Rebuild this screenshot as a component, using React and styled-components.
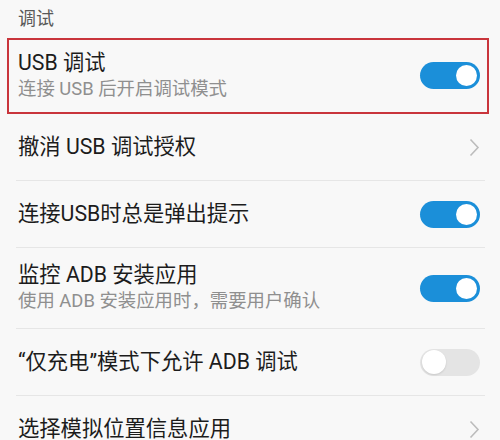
import React from 'react'
import styled, { createGlobalStyle } from 'styled-components'

const GlobalStyle = createGlobalStyle`
  html, body {
    margin: 0;
    padding: 0;
    background: #f8f8f8;
  }
  body {
    font-family: "Roboto", "Noto Sans CJK SC", sans-serif;
    -webkit-font-smoothing: antialiased;
  }
`

const items = [
  { title: 'USB 调试', sub: '连接 USB 后开启调试模式', type: 'switch', on: true, highlight: true },
  { title: '撤消 USB 调试授权', type: 'arrow' },
  { title: '连接USB时总是弹出提示', type: 'switch', on: true },
  { title: '监控 ADB 安装应用', sub: '使用 ADB 安装应用时，需要用户确认', type: 'switch', on: true },
  { title: '“仅充电”模式下允许 ADB 调试', type: 'switch', on: false },
  { title: '选择模拟位置信息应用', type: 'arrow' },
]

function App() {
  return (
    <Page>
      <GlobalStyle />
      <SectionHeader>调试</SectionHeader>
      <List>
        {items.map((item) => (
          <Row key={item.title} $highlight={item.highlight}>
            <RowInner $double={!!item.sub} $highlight={item.highlight}>
              <Texts>
                <Title>{item.title}</Title>
                {item.sub && <Subtitle>{item.sub}</Subtitle>}
              </Texts>
              {item.type === 'switch' ? (
                <Switch $on={item.on}>
                  <Knob $on={item.on} />
                </Switch>
              ) : (
                <Chevron width="11" height="19" viewBox="0 0 11 19">
                  <polyline points="1.5,1.5 9,9.5 1.5,17.5" fill="none" stroke="#bcbcbc" strokeWidth="1.6" />
                </Chevron>
              )}
            </RowInner>
          </Row>
        ))}
      </List>
    </Page>
  )
}

const Page = styled.div`
  width: 500px;
  height: 440px;
  overflow: hidden;
  background: #f8f8f8;
`

const SectionHeader = styled.div`
  height: 38px;
  box-sizing: border-box;
  padding: 0 18px 4px;
  display: flex;
  align-items: center;
  font-size: 18px;
  color: #595959;
`

const List = styled.div`
  display: flex;
  flex-direction: column;
`

const Row = styled.div`
  position: relative;
  padding-left: 16px;

  ${({ $highlight }) => $highlight && `
    &::after {
      content: '';
      position: absolute;
      left: 7px;
      right: 11px;
      top: 0;
      bottom: 0;
      border: 2px solid #c9353c;
      pointer-events: none;
    }
  `}
`

const RowInner = styled.div`
  display: flex;
  align-items: center;
  justify-content: space-between;
  box-sizing: border-box;
  margin-right: 15px;
  padding: ${({ $double, $highlight }) => ($highlight ? '11px' : $double ? '14px' : '0')} 5px ${({ $double, $highlight }) => ($highlight ? '11px' : $double ? '14px' : '0')} 2px;
  min-height: ${({ $double }) => ($double ? '81px' : '67px')};
  border-bottom: 1px solid #e6e6e6;
  ${({ $highlight }) => $highlight && 'min-height: 76px;'}
`

const Texts = styled.div`
  display: flex;
  flex-direction: column;
`

const Title = styled.div`
  font-size: 21.3px;
  line-height: 26px;
  color: #1c1c1c;
`

const Subtitle = styled.div`
  font-size: 18.4px;
  line-height: 26px;
  color: #8f8f8f;
`

const Switch = styled.div`
  width: 60px;
  height: 27px;
  box-sizing: border-box;
  border-radius: 14px;
  padding: ${({ $on }) => ($on ? '3px 3px' : '1.5px 1.5px')};
  display: flex;
  align-items: center;
  justify-content: ${({ $on }) => ($on ? 'flex-end' : 'flex-start')};
  background: ${({ $on }) => ($on ? '#1b8fd9' : '#e4e4e4')};
  flex-shrink: 0;
`

const Knob = styled.div`
  width: ${({ $on }) => ($on ? '21px' : '24px')};
  height: ${({ $on }) => ($on ? '21px' : '24px')};
  border-radius: 50%;
  background: #ffffff;
  box-shadow: ${({ $on }) => ($on ? 'none' : '0 1px 2px rgba(0,0,0,0.12)')};
`

const Chevron = styled.svg`
  flex-shrink: 0;
  display: block;
`

export default App
